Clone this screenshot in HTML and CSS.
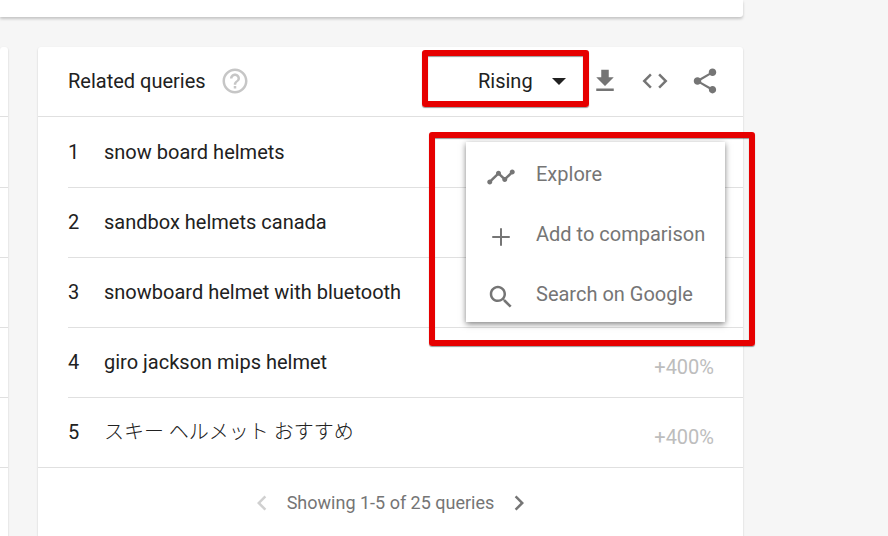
FILE: index.html
```
<!DOCTYPE html>
<html lang="en">
<head>
  <meta charset="UTF-8" />
  <meta name="viewport" content="width=device-width, initial-scale=1" />
  <title>Related queries</title>
  <link rel="stylesheet" href="styles.css">
</head>
<body>

  <div class="panel"></div>

  <div class="columns">
    <div class="card side">
      <div class="side-header"></div>
      <div class="side-list">
        <div></div>
        <div></div>
        <div></div>
        <div></div>
        <div></div>
      </div>
    </div>

    <section class="card queries">
      <header class="card-header">
        <h2>Related queries</h2>
        <button class="icon-btn help" aria-label="Help">
          <svg viewBox="0 0 24 24"><path d="M11 18h2v-2h-2v2zm1-16C6.480 2 2 6.480 2 12s4.480 10 10 10 10-4.480 10-10S17.520 2 12 2zm0 18c-4.410 0-8-3.590-8-8s3.590-8 8-8 8 3.590 8 8-3.590 8-8 8zm0-14c-2.210 0-4 1.790-4 4h2c0-1.100.9-2 2-2s2 .9 2 2c0 2-3 1.750-3 5h2c0-2.250 3-2.500 3-5 0-2.210-1.790-4-4-4z"/></svg>
        </button>
        <div class="sort marked">
          <select aria-label="Sort queries">
            <option>Rising</option>
            <option>Top</option>
          </select>
          <svg class="arrow" viewBox="0 0 12 6"><path d="M0 0h12L6 6z"/></svg>
        </div>
        <div class="tools">
          <button class="icon-btn" aria-label="Download">
            <svg viewBox="0 0 24 24"><path d="M19 9h-4V3H9v6H5l7 7 7-7zM5 18v2h14v-2H5z"/></svg>
          </button>
          <button class="icon-btn" aria-label="Embed">
            <svg viewBox="0 0 24 24"><path d="M9.4 16.6L4.8 12l4.600-4.600L8 6l-6 6 6 6 1.400-1.400zm5.200 0l4.600-4.600-4.600-4.600L16 6l6 6-6 6-1.400-1.400z"/></svg>
          </button>
          <button class="icon-btn" aria-label="Share">
            <svg viewBox="0 0 24 24"><path d="M18 16.080c-.76 0-1.440.3-1.960.77L8.910 12.700c.05-.23.09-.46.09-.7s-.04-.47-.09-.7l7.050-4.110c.54.5 1.250.81 2.040.81 1.660 0 3-1.340 3-3s-1.340-3-3-3-3 1.340-3 3c0 .24.040.47.090.7L8.040 9.810C7.500 9.310 6.790 9 6 9c-1.660 0-3 1.340-3 3s1.340 3 3 3c.79 0 1.500-.31 2.040-.81l7.120 4.160c-.05.21-.08.43-.08.65 0 1.610 1.310 2.920 2.920 2.920s2.920-1.310 2.920-2.920-1.310-2.920-2.920-2.920z"/></svg>
          </button>
        </div>
      </header>

      <ol class="list">
        <li><span class="rank">1</span><span class="query">snow board helmets</span></li>
        <li><span class="rank">2</span><span class="query">sandbox helmets canada</span></li>
        <li><span class="rank">3</span><span class="query">snowboard helmet with bluetooth</span></li>
        <li><span class="rank">4</span><span class="query">giro jackson mips helmet</span><span class="change">+400%</span></li>
        <li><span class="rank">5</span><span class="query" lang="ja">スキー ヘルメット おすすめ</span><span class="change">+400%</span></li>
      </ol>

      <footer class="pager">
        <button class="icon-btn" aria-label="Previous" disabled>
          <svg viewBox="0 0 24 24"><path d="M15.410 7.410L14 6l-6 6 6 6 1.410-1.410L10.830 12z"/></svg>
        </button>
        <span>Showing 1-5 of 25 queries</span>
        <button class="icon-btn" aria-label="Next">
          <svg viewBox="0 0 24 24"><path d="M10 6L8.590 7.410 13.170 12l-4.580 4.590L10 18l6-6z"/></svg>
        </button>
      </footer>

      <div class="menu marked">
        <button>
          <svg viewBox="0 0 24 24"><path d="M23 8c0 1.100-.9 2-2 2-.18 0-.35-.02-.51-.07l-3.560 3.550c.05.16.07.34.07.52 0 1.100-.9 2-2 2s-2-.9-2-2c0-.18.020-.36.070-.52l-2.550-2.550c-.16.05-.34.07-.52.07s-.36-.02-.52-.07l-4.550 4.560c.05.16.07.33.07.51 0 1.100-.9 2-2 2s-2-.9-2-2 .9-2 2-2c.18 0 .35.020.51.070l4.560-4.550C8.020 9.360 8 9.180 8 9c0-1.100.9-2 2-2s2 .9 2 2c0 .18-.02.36-.07.52l2.550 2.550c.16-.05.34-.07.52-.07s.36.020.52.070l3.550-3.560C19.020 8.350 19 8.180 19 8c0-1.100.9-2 2-2s2 .9 2 2z"/></svg>
          Explore
        </button>
        <button>
          <svg viewBox="0 0 24 24"><path d="M19 12.800h-6.200V19h-1.600v-6.200H5v-1.600h6.200V5h1.600v6.200H19z"/></svg>
          Add to comparison
        </button>
        <button>
          <svg viewBox="0 0 24 24"><path d="M15.500 14h-.79l-.28-.27C15.410 12.590 16 11.110 16 9.500 16 5.910 13.090 3 9.500 3S3 5.910 3 9.500 5.910 16 9.500 16c1.610 0 3.090-.59 4.230-1.570l.27.28v.79l5 4.990L20.490 19l-4.990-5zm-6 0C7.010 14 5 11.990 5 9.500S7.010 5 9.500 5 14 7.010 14 9.500 11.990 14 9.500 14z"/></svg>
          Search on Google
        </button>
      </div>
    </section>
  </div>

</body>
</html>
```
FILE: styles.css
```
* {
  box-sizing: border-box;
}
body {
  margin: 0;
  padding-right: 145px;
  min-height: 100vh;
  display: flex;
  flex-direction: column;
  background: #f6f6f6;
  color: #212121;
  font-family: Roboto, "Noto Sans CJK JP", sans-serif;
  font-size: 20px;
  line-height: 30px;
}
button, select {
  font: inherit;
  color: inherit;
  border: none;
  background: none;
  padding: 0;
  cursor: pointer;
}
svg {
  display: block;
  fill: currentColor;
}
.panel {
  height: 17px;
  margin-bottom: 30px;
  background: #fff;
  border-radius: 0 0 3px 0;
  box-shadow: 0 2px 3px rgba(0, 0, 0, 0.2);
}
.columns {
  flex: 1;
  display: flex;
  gap: 30px;
}
.card {
  background: #fff;
  border-radius: 3px 3px 0 0;
  box-shadow: 0 1px 2px rgba(0, 0, 0, 0.2);
}
.side {
  width: 8px;
}
.queries {
  flex: 1;
  position: relative;
}
.card-header, .side-header {
  height: 70px;
  border-bottom: 1px solid #e0e0e0;
}
.card-header {
  display: flex;
  align-items: center;
  padding: 0 23px 2px 30px;
}
h2 {
  margin: 0;
  font-size: 20px;
  font-weight: 400;
}
.icon-btn {
  width: 30px;
  height: 30px;
  color: #757575;
}
.icon-btn:disabled {
  color: #d0d0d0;
  cursor: default;
}
.help {
  margin-left: 14px;
  color: #c6c6c6;
}
.sort {
  position: relative;
  margin-left: auto;
  margin-right: 24px;
}
.sort select {
  display: block;
  width: 88px;
  height: 30px;
  appearance: none;
}
.arrow {
  position: absolute;
  top: 12px;
  right: 0;
  width: 14px;
  height: 7px;
  pointer-events: none;
}
.tools {
  display: flex;
  gap: 20px;
}

/* red highlight boxes */
.marked::after {
  content: "";
  position: absolute;
  border: 6px solid #e60000;
  border-radius: 3px;
  box-shadow: 0 1px 1px rgba(0, 0, 0, 0.4), inset 0 1px 1px rgba(0, 0, 0, 0.4);
  pointer-events: none;
}
.sort::after {
  inset: -16px -23px -11px -56px;
}
.menu::after {
  inset: -10px -30px -24px -37px;
}

.list {
  margin: 0;
  padding: 1px 0 0;
  list-style: none;
  border-bottom: 1px solid #e0e0e0;
}
.list li {
  height: 70px;
  margin-left: 30px;
  padding: 0 29px 2px 0;
  display: flex;
  align-items: center;
  border-bottom: 1px solid #e0e0e0;
}
.list li:last-child {
  height: 69px;
  border-bottom: none;
}
.rank {
  width: 36px;
}
.query:lang(ja) {
  font-weight: 300;
}
.change {
  margin-left: auto;
  padding-top: 10px;
  color: #bdbdbd;
}
.side-list {
  padding-top: 1px;
}
.side-list div {
  height: 70px;
  border-bottom: 1px solid #e0e0e0;
}
.pager {
  display: flex;
  justify-content: center;
  align-items: center;
  gap: 10px;
  height: 70px;
  color: #757575;
  font-size: 18px;
}
.menu {
  position: absolute;
  top: 95px;
  right: 18px;
  width: 259px;
  background: #fff;
  box-shadow: 0 2px 6px rgba(0, 0, 0, 0.5);
}
.menu button {
  display: flex;
  align-items: center;
  gap: 20px;
  width: 100%;
  height: 60px;
  padding: 4px 0 0 20px;
  color: #757575;
  white-space: nowrap;
}
.menu svg {
  width: 30px;
  height: 30px;
  margin-top: 5px;
}
```
